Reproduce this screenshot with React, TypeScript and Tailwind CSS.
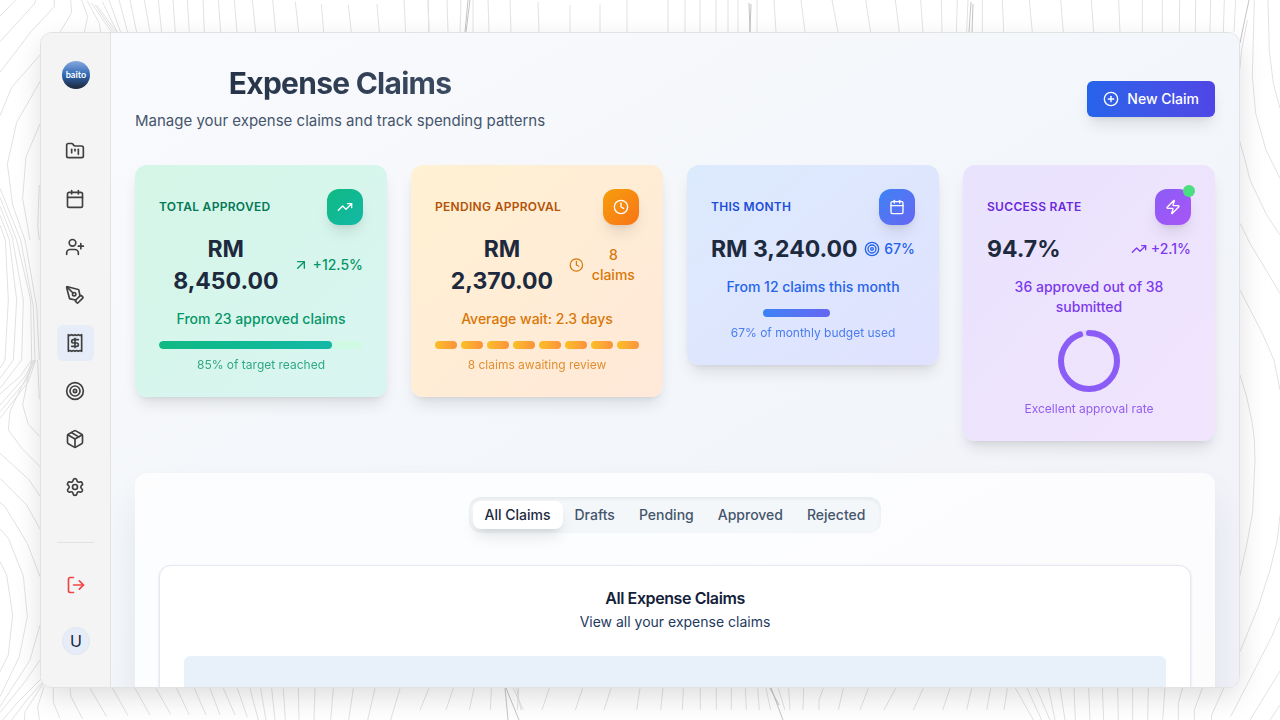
import type { ReactNode } from "react";
import {
  ArrowUpRight,
  Calendar,
  CirclePlus,
  Clock,
  FolderKanban,
  LogOut,
  Package,
  PenTool,
  Receipt,
  Settings,
  Target,
  TrendingUp,
  UserPlus,
  Zap,
} from "lucide-react";

/* Contour lines, grouped by the part of the backdrop they cover. */
const contoursTopLeft = [
  "M47 0L0 48", "M107 0L103 12L0 125", "M163 0V20L93 95L0 217", "M212 0L215 38L180 97L35 262L0 347",
  "M245 0L263 50L253 97L120 245L50 367L22 492L38 615L75 720", "M120 372L78 470L68 595L90 720", "M118 555L113 680L118 720",
  "M0 565L62 720", "M0 592L50 720", "M0 618L40 720", "M0 645L28 720", "M0 675L16 720",
  "M262 3L298 70L302 97", "M275 10L335 97", "M285 15L342 97", "M290 15L350 97", "M307 5L352 97", "M327 0L362 97", "M357 0L383 97",
  "M390 0L410 97", "M433 0L450 97", "M475 0L485 97", "M519 0L526 97", "M562 0L568 97", "M609 0L613 97", "M655 0L662 97",
  "M703 0L711 97", "M757 0L767 97", "M818 0L827 97", "M886 5L896 97", "M964 12L971 97", "M1045 15L1054 97", "M1131 12L1138 97",
  "M1212 0L1217 97", "M1284 0L1287 97",
];
const contoursMidLeft = [
  "M75 -360L110 -160L118 0", "M62 -360L100 -160L105 0", "M50 -360L92 -180L95 0", "M38 -360L70 -180L65 0", "M28 -360L50 -180L40 0", "M16 -360L25 -180L15 0",
  "M15 0L0 25", "M40 0L0 55", "M65 0L0 85", "M95 0L60 50L0 102", "M100 0L75 50L0 135", "M103 0L80 60L0 155", "M107 0L85 65L0 175",
  "M113 0L118 118", "M95 0L68 135L85 193L120 230", "M105 0L55 100L30 155L25 210L68 268L120 320",
  "M0 280L85 357L120 408", "M0 355L80 435L120 507", "M0 427L15 440L82 550L120 650",
  "M0 507L25 535L70 648L82 770L58 890L0 1010", "M0 605L20 645L38 765L25 885L0 935",
  "M120 795L90 900L0 1040", "M120 900L75 965L0 1058", "M125 955L55 1025L8 1080", "M130 965L80 1020L35 1080", "M130 970L75 1055L73 1080", "M132 980L113 1040L118 1080",
  "M160 985V1027L180 1075", "M210 985L213 1010L248 1077", "M270 985L320 1070", "M338 985L384 1067", "M405 985L450 1065", "M468 985L512 1063",
  "M530 985L568 1065", "M583 985L618 1065", "M630 985L660 1065", "M670 985L705 1065", "M712 985L742 1072", "M750 985L775 1080", "M782 985L798 1080",
  "M815 985L825 1080", "M850 985L856 1080", "M895 985L897 1080", "M945 985L942 1080", "M1000 985L992 1080", "M1060 985L1046 1080", "M1125 985L1103 1080", "M1200 985L1172 1080",
];
const contoursBottom = [
  "M27 655L0 720", "M100 655L78 720", "M162 655L148 720", "M214 655L211 720", "M280 655L310 720", "M290 655L303 720", "M296 655L292 720",
  "M388 655L366 720", "M488 655L466 720", "M573 655L552 720", "M660 655L650 720", "M729 655L722 720", "M790 655L787 720", "M841 655V720",
  "M889 655V720", "M934 655V720", "M976 655L979 720", "M1013 655L1018 720", "M1038 655L1052 720", "M1075 655L1095 720", "M1106 655L1110 720",
  "M1151 655L1149 720", "M1210 655L1197 690V720", "M1270 655L1255 720", "M1345 655L1320 720", "M1427 655L1392 720", "M1510 655L1480 720",
  "M1590 655L1568 720", "M1655 655L1640 720", "M1712 655L1700 720", "M1762 655L1752 720",
];
const contoursBottomRight = [
  "M-75 742L-20 840", "M-40 742L5 840", "M-12 742L30 840", "M25 742L45 840", "M60 742L75 840", "M102 742L106 840", "M146 742L150 840",
  "M187 742L191 840", "M233 742L235 840", "M278 742V840", "M325 742L323 840", "M375 742L368 840", "M428 742L415 790V840",
  "M488 742L463 810V840", "M552 742L515 825V840", "M720 530L695 590L572 830", "M720 693L630 840", "M720 795L690 840",
  "M643 0L645 60L638 215L622 305L600 405L560 480", "M720 225L712 300L690 390L655 500L600 635",
];
const contoursTop = [
  "M428 0L429 32", "M447 0L448 32", "M461 0L460 32", "M473 0V32", "M488 0L489 32", "M510 0L511 32", "M538 2L539 32", "M570 5V32", "M600 4V32",
  "M627 0V32", "M668 0V32", "M685 0V32", "M700 0V32", "M716 0V32", "M728 0V32", "M738 0V32", "M757 0V32", "M774 0L776 32", "M801 0L805 32", "M832 0L838 32",
];
const contoursRight = [
  "M77 0L92 97", "M166 0L178 97", "M242 0L249 97", "M304 0L306 97", "M352 0L349 97", "M384 0L380 97", "M427 0V97", "M487 0L491 97", "M568 0L577 97",
  "M662 0L670 97", "M754 0L761 97", "M836 0L840 97", "M907 0V97", "M967 0V97", "M1019 0L1018 97", "M1067 0L1066 97", "M1112 0L1110 97",
  "M1153 0L1150 97", "M1187 0L1182 97", "M1222 60L1205 150L1198 220", "M1243 0L1237 230L1247 340L1278 450L1320 535",
  "M1284 0L1288 155L1300 250L1320 325", "M1198 420L1215 480L1230 540L1280 645L1320 705", "M1200 670L1230 730L1320 880",
  "M1200 870L1267 1000L1302 1080L1320 1170", "M1200 1125L1220 1190L1237 1270L1243 1320",
];
const darkContours = [
  "M470 0L466 32", "M468 0L465 32", "M749 3L750 32", "M751 4L750 32", "M971 2L969 32", "M973 4L972 32", "M1249 0L1243 28L1240 43",
  "M505 688L508 720", "M506 688L519 720", "M771 688L783 720", "M770 688L779 705",
];

function Lines({ paths, transform }: { paths: string[]; transform?: string }) {
  return (
    <g transform={transform}>
      {paths.map((d) => (
        <path key={d} d={d} />
      ))}
    </g>
  );
}

function Backdrop() {
  return (
    <svg className="absolute inset-0 h-full w-full" viewBox="0 0 1280 720" preserveAspectRatio="xMidYMid slice" aria-hidden="true">
      <g fill="none" stroke="#e2e2e2" strokeWidth="3">
        <Lines paths={contoursTopLeft} transform="scale(0.33333)" />
        <Lines paths={contoursMidLeft} transform="translate(0 360) scale(0.33333)" />
        <Lines paths={contoursBottom} transform="translate(420 470) scale(0.33333)" />
        <Lines paths={contoursBottomRight} transform="translate(1040 440) scale(0.33333)" />
        <Lines paths={contoursRight} transform="translate(840 0) scale(0.33333)" />
      </g>
      <g fill="none" stroke="#e2e2e2" strokeWidth="1">
        <Lines paths={contoursTop} />
      </g>
      <g fill="none" stroke="#c4c4c4" strokeWidth="1">
        <Lines paths={darkContours} />
      </g>
    </svg>
  );
}

const navItems = [
  { label: "Projects", Icon: FolderKanban },
  { label: "Calendar", Icon: Calendar },
  { label: "Add member", Icon: UserPlus },
  { label: "Design", Icon: PenTool },
  { label: "Expense claims", Icon: Receipt, active: true },
  { label: "Goals", Icon: Target },
  { label: "Assets", Icon: Package },
  { label: "Settings", Icon: Settings },
];

function Sidebar() {
  return (
    <aside className="flex w-[70px] shrink-0 flex-col border-r border-[#e2e2e2] bg-[#f4f4f4] px-4 pt-7 pb-8">
      <a
        href="#home"
        className="ml-[5px] flex size-7 shrink-0 items-center justify-center rounded-full bg-linear-to-b from-[#86aade] via-[#2f68b4] to-[#1b2638] font-[Lato,sans-serif] text-[9px] font-bold text-white"
      >
        baito
      </a>
      <nav className="mt-11 flex flex-col gap-3">
        {navItems.map(({ label, Icon, active }) => (
          <a
            key={label}
            href="#nav"
            aria-label={label}
            aria-current={active ? "page" : undefined}
            className={
              active
                ? "flex h-9 items-center rounded-md bg-[#e6edf8] pl-2 text-[#404040]"
                : "flex h-9 items-center rounded-md pl-2 text-[#404040]"
            }
          >
            <Icon size={20} />
          </a>
        ))}
      </nav>
      <div className="mt-auto border-t border-[#e2e2e2] pt-6">
        <button type="button" aria-label="Log out" className="flex h-9 w-full items-center justify-center text-[#ef4444]">
          <LogOut size={20} />
        </button>
        <button
          type="button"
          aria-label="Account"
          className="mt-6 ml-[5px] flex size-7 items-center justify-center rounded-full border border-[#dfe7f1] bg-[#e6edf8] text-base text-[#14263f]"
        >
          U
        </button>
      </div>
    </aside>
  );
}

type StatCardProps = {
  label: string;
  value: string;
  change: string;
  note: string;
  caption: string;
  icon: ReactNode;
  changeIcon: ReactNode;
  cardClass: string;
  iconClass: string;
  labelClass: string;
  textClass: string;
  badge?: boolean;
  children: ReactNode;
};

function StatCard(p: StatCardProps) {
  return (
    <article className={`rounded-xl p-6 shadow-[0_10px_15px_-3px_rgba(0,0,0,0.1),0_4px_6px_-4px_rgba(0,0,0,0.1)] ${p.cardClass}`}>
      <div className="flex items-center justify-between">
        <h2 className={`text-xs font-semibold tracking-wide uppercase ${p.labelClass}`}>{p.label}</h2>
        <div className={`relative flex size-9 items-center justify-center rounded-xl text-white shadow-lg ${p.iconClass}`}>
          {p.icon}
          {p.badge && <span className="absolute -top-1 -right-1 size-3 rounded-full bg-[#4ade80]" />}
        </div>
      </div>
      <div className={`mt-2 flex items-center justify-between ${p.textClass}`}>
        <p className="text-center text-[23px] leading-8 font-bold text-slate-800">{p.value}</p>
        <div className="flex items-center gap-1 text-center text-sm font-medium">
          {p.changeIcon}
          <span>{p.change}</span>
        </div>
      </div>
      <p className={`mt-3 text-center text-sm font-medium ${p.textClass}`}>{p.note}</p>
      <div className="mt-3">{p.children}</div>
      <p className={`mt-2 text-center text-xs opacity-80 ${p.textClass}`}>{p.caption}</p>
    </article>
  );
}

const circumference = 2 * Math.PI * 28;

function Stats() {
  return (
    <section className="grid grid-cols-4 items-start gap-6">
      <StatCard
        label="Total Approved"
        value="RM 8,450.00"
        change="+12.5%"
        note="From 23 approved claims"
        caption="85% of target reached"
        icon={<TrendingUp size={16} />}
        changeIcon={<ArrowUpRight size={16} />}
        cardClass="bg-linear-to-br from-[#d5f6e7] to-[#d9f5f1]"
        iconClass="bg-linear-to-br from-[#10b981] to-[#14b8a6]"
        labelClass="text-[#047857]"
        textClass="text-[#059669]"
      >
        <div className="h-2 overflow-hidden rounded-full bg-[#d1fae5]">
          <div className="h-full w-[85%] rounded-full bg-linear-to-r from-[#10b981] to-[#14b8a6]" />
        </div>
      </StatCard>
      <StatCard
        label="Pending Approval"
        value="RM 2,370.00"
        change="8 claims"
        note="Average wait: 2.3 days"
        caption="8 claims awaiting review"
        icon={<Clock size={16} />}
        changeIcon={<Clock size={16} />}
        cardClass="bg-linear-to-br from-[#fff1d3] to-[#ffe8d8]"
        iconClass="bg-linear-to-br from-[#f59e0b] to-[#f97316]"
        labelClass="text-[#b45309]"
        textClass="text-[#d97706]"
      >
        <div className="flex gap-1">
          {Array.from({ length: 8 }, (_, i) => (
            <span key={i} className="h-2 flex-1 rounded-full bg-linear-to-r from-[#fbbf24] to-[#fb923c]" />
          ))}
        </div>
      </StatCard>
      <StatCard
        label="This Month"
        value="RM 3,240.00"
        change="67%"
        note="From 12 claims this month"
        caption="67% of monthly budget used"
        icon={<Calendar size={16} />}
        changeIcon={<Target size={16} />}
        cardClass="bg-linear-to-br from-[#dceafd] to-[#e0e2ff]"
        iconClass="bg-linear-to-br from-[#3b82f6] to-[#6366f1]"
        labelClass="text-[#1d4ed8]"
        textClass="text-[#2563eb]"
      >
        <div className="mx-auto h-2 w-[100px]">
          <div className="h-full w-[67%] rounded-full bg-linear-to-r from-[#3b82f6] to-[#6366f1]" />
        </div>
      </StatCard>
      <StatCard
        label="Success Rate"
        value="94.7%"
        change="+2.1%"
        note="36 approved out of 38 submitted"
        caption="Excellent approval rate"
        icon={<Zap size={16} />}
        changeIcon={<TrendingUp size={16} />}
        cardClass="bg-linear-to-br from-[#e9e3fe] to-[#f1e4fd]"
        iconClass="bg-linear-to-br from-[#8b5cf6] to-[#a855f7]"
        labelClass="text-[#6d28d9]"
        textClass="text-[#7c3aed]"
        badge
      >
        <svg className="mx-auto size-16 -rotate-90" viewBox="0 0 64 64" fill="none" strokeWidth="6" aria-hidden="true">
          <circle cx="32" cy="32" r="28" stroke="#ddd6fe" />
          <circle
            cx="32"
            cy="32"
            r="28"
            stroke="#8b5cf6"
            strokeLinecap="round"
            strokeDasharray={`${circumference * 0.947} ${circumference}`}
          />
        </svg>
      </StatCard>
    </section>
  );
}

const tabs = ["All Claims", "Drafts", "Pending", "Approved", "Rejected"];

function Claims() {
  return (
    <section className="mt-8 flex flex-col items-center rounded-xl bg-white/75 p-6 shadow-[0_20px_40px_-8px_rgba(15,40,70,0.12)]">
      <div role="tablist" className="flex rounded-xl bg-[#f3f7fa] p-1 shadow-[inset_0_2px_4px_0_rgba(0,0,0,0.06)]">
        {tabs.map((tab, i) => (
          <button
            key={tab}
            type="button"
            role="tab"
            aria-selected={i === 0}
            className={
              i === 0
                ? "rounded-lg bg-white px-3 py-1 text-sm font-medium text-slate-800 shadow-lg"
                : "rounded-lg px-3 py-1 text-sm font-medium text-slate-600"
            }
          >
            {tab}
          </button>
        ))}
      </div>
      <div className="mt-8 w-full rounded-xl border border-[#e3e8f4] bg-white p-6 text-center shadow-sm">
        <h2 className="text-base leading-4 font-semibold tracking-tight text-[#14213a]">All Expense Claims</h2>
        <p className="mt-1.5 text-sm text-[#1e3a5f]">View all your expense claims</p>
        <div className="mt-6 h-40 rounded-md bg-[#e8f0fa]" />
      </div>
    </section>
  );
}

export default function App() {
  return (
    <div className="relative h-screen overflow-hidden bg-white px-10 py-8 font-[Inter,sans-serif] antialiased">
      <Backdrop />
      <div className="relative flex h-full overflow-hidden rounded-xl border border-[#e2e2e2] bg-[#f4f4f4] shadow-[0_10px_30px_-3px_rgba(0,0,0,0.15)]">
        <Sidebar />
        <main className="min-w-0 flex-1 overflow-y-auto bg-linear-to-br from-[#f9fafd] via-[#f3f6fa] to-[#f1f2f8] px-6 py-8 [scrollbar-width:none]">
          <header className="mb-8 flex items-center justify-between">
            <div className="text-center">
              <h1 className="bg-linear-to-r from-slate-800 to-slate-600 bg-clip-text text-3xl leading-9 font-bold tracking-tight text-transparent">
                Expense Claims
              </h1>
              <p className="mt-2 text-[15px] leading-6 text-slate-600">Manage your expense claims and track spending patterns</p>
            </div>
            <button
              type="button"
              className="flex h-9 items-center gap-2 rounded-md bg-linear-to-r from-[#2563eb] to-[#4f46e5] px-4 text-sm font-medium text-white shadow-lg"
            >
              <CirclePlus size={16} />
              New Claim
            </button>
          </header>
          <Stats />
          <Claims />
        </main>
      </div>
    </div>
  );
}
